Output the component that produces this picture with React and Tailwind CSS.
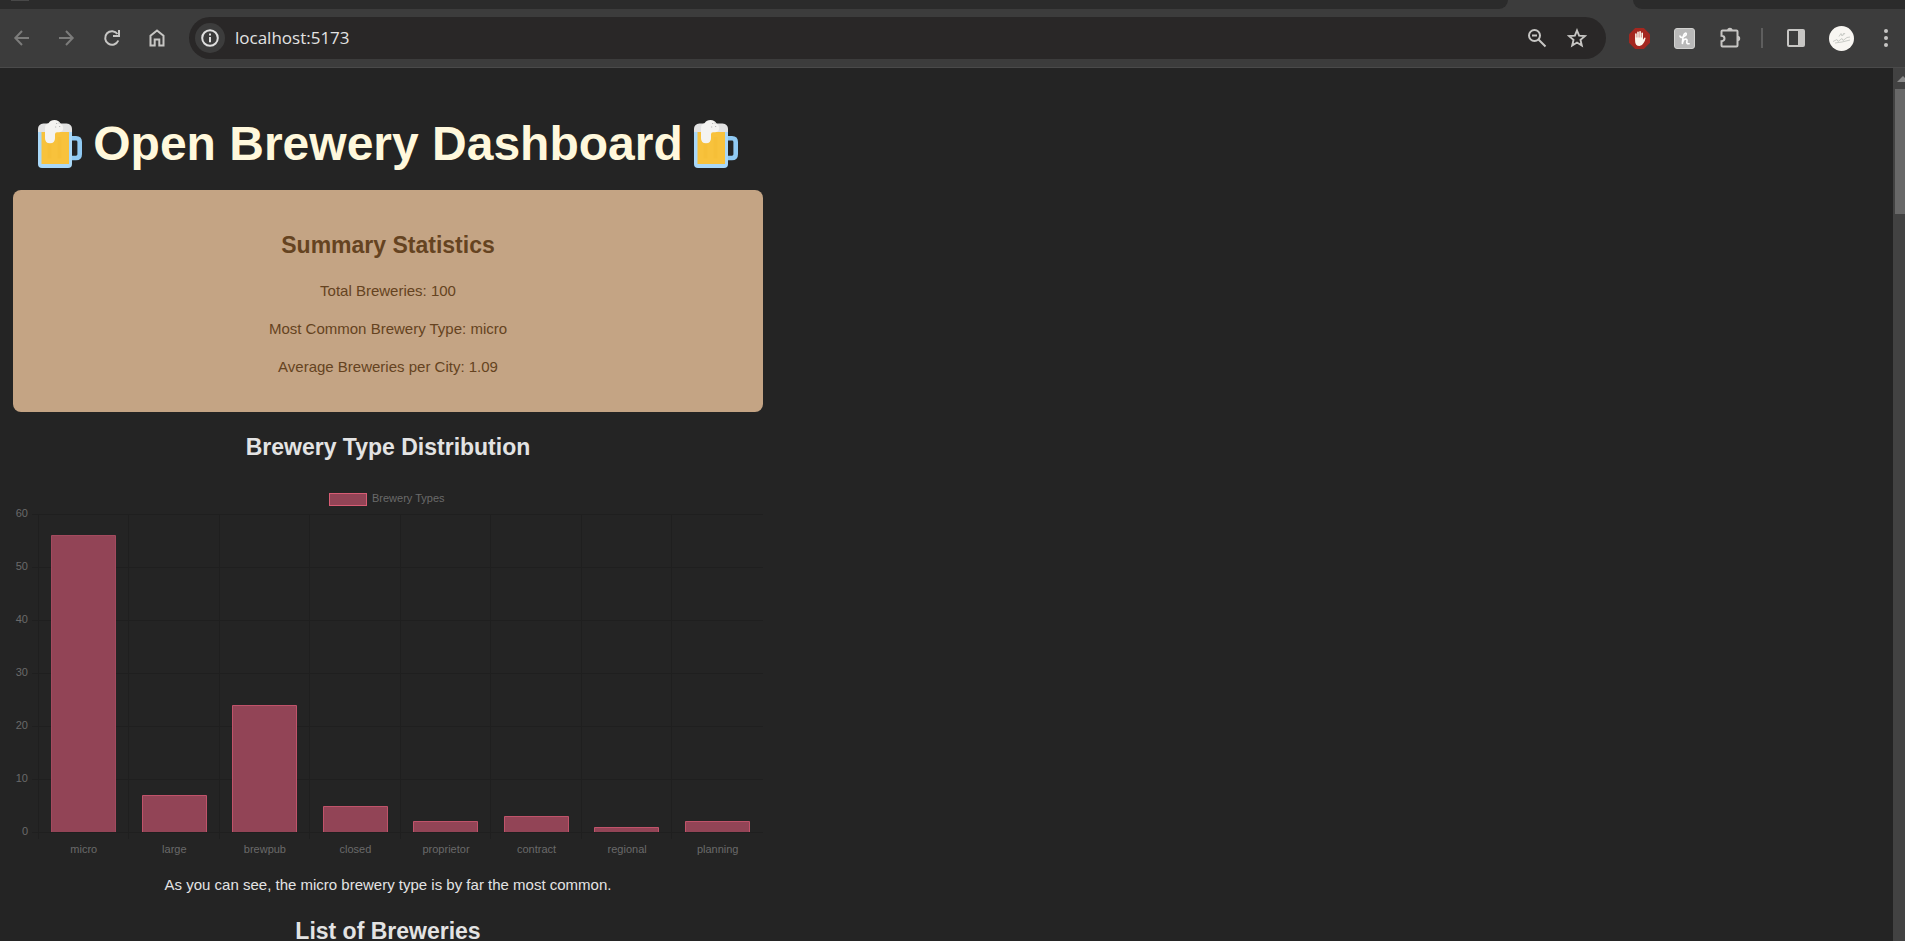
import React from "react";

const data = [
  ["micro", 56],
  ["large", 7],
  ["brewpub", 24],
  ["closed", 5],
  ["proprietor", 2],
  ["contract", 3],
  ["regional", 1],
  ["planning", 2],
];

function IconButton({ label, children, className = "" }) {
  return (
    <button type="button" aria-label={label} className={`flex shrink-0 items-center justify-center ${className}`}>
      {children}
    </button>
  );
}

function Stroke({ children, tone = "stroke-[#c7c6c4]" }) {
  return (
    <svg viewBox="0 0 20 20" className={`size-5 fill-none stroke-2 ${tone}`}>
      {children}
    </svg>
  );
}

function Beer() {
  return (
    <svg viewBox="0 0 44 48" className="h-12 w-11 shrink-0" aria-hidden="true">
      <path d="M33 18.200h5q3.700 0 3.700 3.700v12.400q0 3.700-3.700 3.700h-5" fill="none" stroke="#90caf3" strokeWidth="4.600" />
      <path d="M0 11h34v33q0 4-4 4H4q-4 0-4-4z" fill="#a9d8f8" />
      <path d="M3.500 11h27.500v33H3.500z" fill="#f8c23c" />
      <path d="M9.500 23h4v15.500h-4zM19.500 17h4v21.500h-4z" fill="#f6bf38" />
      <path d="M0 12V9q0-5 5.500-5.500h23Q34 4 34 9v3z" fill="#e2e2e2" />
      <path d="M7 8.500Q6.800 4 10.500 3.200 12.500 0 16.500 0q4.300 0 6 3.500 2.700 1.500 2.700 4.500 0 4-4 4.200H19q-2 0-2 2v4q0 5-5 5t-5-5z" fill="#f4f3f1" />
      <path d="M18 3.500h1.200M20.500 3h1.200M17 7h1.200M21 6.500h1.200" stroke="#b9b9b9" strokeWidth="1.200" />
    </svg>
  );
}

function BrowserBar() {
  return (
    <header className="shrink-0 bg-[#3c3c3c]">
      <div className="flex h-[9px] justify-between">
        <div className="w-[1508px] rounded-br-[14px] bg-[#2b2b2b] pl-[11px]">
          <div className="h-px w-[18px] bg-[#484848]" />
        </div>
        <div className="w-[272px] rounded-bl-[14px] bg-[#2b2b2b]" />
      </div>
      <div className="flex h-[59px] items-center border-b border-[#4a4a4a] pr-[9px]">
        <nav className="flex w-[189px] shrink-0 items-center gap-[25px] pl-3">
          <IconButton label="Back">
            <Stroke tone="stroke-[#7c7c7b]"><path d="M17 10H3.500M10 3 3.300 10l6.700 7" /></Stroke>
          </IconButton>
          <IconButton label="Forward">
            <Stroke tone="stroke-[#7c7c7b]"><path d="M2 10h13.500M9 3l6.700 7L9 17" /></Stroke>
          </IconButton>
          <IconButton label="Reload">
            <Stroke><path d="M16.300 12.500A6.800 6.800 0 1 1 15.500 6M17 2v6h-6" /></Stroke>
          </IconButton>
          <IconButton label="Home">
            <Stroke><path d="M3.500 17.500V7.800L10 2.500l6.500 5.300v9.700h-4.200v-6H7.700v6z" /></Stroke>
          </IconButton>
        </nav>
        <div className="flex h-[42px] flex-1 items-center rounded-full bg-[#292727] pl-1.5 pr-[19px]">
          <IconButton label="Site information" className="size-[30px] rounded-full bg-[#3c3c3c]">
            <Stroke tone="stroke-[#e0e0e0]">
              <circle cx="10" cy="10" r="7.800" />
              <path d="M10 9v5.200M10 5.600v2" />
            </Stroke>
          </IconButton>
          <input
            aria-label="Address"
            defaultValue="localhost:5173"
            className="ml-[10px] min-w-0 flex-1 bg-transparent font-['Open_Sans',sans-serif] text-[17px] text-[#e3e3e3] outline-none"
          />
          <div className="flex items-center gap-5">
            <IconButton label="Zoom">
              <Stroke><circle cx="7.500" cy="7.500" r="5.500" /><path d="m11.500 11.500 7 7M5 7.500h5" /></Stroke>
            </IconButton>
            <IconButton label="Bookmark">
              <svg viewBox="0 0 20 20" className="size-5 fill-none stroke-[#c7c6c4]" strokeWidth="1.900">
                <path d="m10 2.500 2.100 5.200 5.800.4-4.400 3.800 1.300 5.600-4.800-3-4.800 3 1.300-5.600L2.100 8.100l5.800-.4z" />
              </svg>
            </IconButton>
          </div>
        </div>
        <div className="flex shrink-0 items-center pl-[23px]">
          <IconButton label="Ad blocker">
            <svg viewBox="0 0 21 21" className="size-[21px]">
              <path d="M6.200 0h8.600L21 6.200v8.600L14.800 21H6.200L0 14.800V6.200z" fill="#a3271f" />
              <path d="M6.900 11V6M9 10V4.200M11.100 10V3.800M13.200 10.500V5.300" stroke="#fbf6ec" strokeWidth="1.600" strokeLinecap="round" />
              <path d="M6.100 9.500H14v2.300l1.300-2q.8-.6 1.300.1-.6 3-2 5.200-1.400 2.800-4.100 2.800-4.400 0-4.400-5z" fill="#fbf6ec" />
            </svg>
          </IconButton>
          <IconButton label="Honey" className="ml-6">
            <svg viewBox="0 0 21 21" className="size-[21px]">
              <rect x=".5" y=".5" width="20" height="20" rx="2.500" fill="#b9b9b9" stroke="#d2d2d0" />
              <path d="M6 8q.3 1.800 2.500 1.200Q12.600 8 12.300 5.700 11.500 4.300 10 6.500 8.600 9.500 8.300 16q.8-4.700 3.200-5 2 0 1.400 2.500-.7 2.700 2.200 2.200" fill="none" stroke="#fff" strokeWidth="1.600" strokeLinecap="round" />
            </svg>
          </IconButton>
          <IconButton label="Extensions" className="ml-6">
            <svg viewBox="0 0 22 22" className="size-[22px]">
              <path d="M3.500 3.500h14q1 0 1 1v14q0 1-1 1h-14q-1 0-1-1v-4.300q3-.3 3-2.700t-3-2.700V4.500q0-1 1-1z" fill="none" stroke="#c7c6c4" strokeWidth="2" />
              <path d="M8.200 3.500a2.700 2.700 0 0 1 5.400 0zM18.500 8.800a2.700 2.700 0 0 1 0 5.400z" fill="#c7c6c4" />
            </svg>
          </IconButton>
          <div className="ml-5 h-5 w-0.5 bg-[#5e5e5e]" />
          <IconButton label="Side panel" className="ml-[23px]">
            <svg viewBox="0 0 20 20" className="size-5">
              <rect x="2" y="2" width="16" height="16" rx="1" fill="none" stroke="#c7c6c4" strokeWidth="2" />
              <path d="M12 2h6v16h-6z" fill="#c7c6c4" />
            </svg>
          </IconButton>
          <IconButton label="Profile" className="ml-[23px] size-[25px] rounded-full bg-[#f8f6f2]">
            <svg viewBox="0 0 25 25" className="size-[25px] fill-none stroke-[#c9cbc6]">
              <path d="M10 10.500l2-3 1 2.500 2-3M14 9.500l2-2.500M4 15.500l4-2 1 2 4-3 1 2 4-3 3-.5M6 17l7-1 8-2" />
            </svg>
          </IconButton>
          <IconButton label="Menu" className="ml-[22px]">
            <svg viewBox="0 0 20 20" className="size-5 fill-[#c7c6c4]">
              <circle cx="10" cy="3" r="2" /><circle cx="10" cy="10" r="2" /><circle cx="10" cy="17" r="2" />
            </svg>
          </IconButton>
        </div>
      </div>
    </header>
  );
}

function Chart() {
  const left = 25.5;
  const step = 90.56;
  const base = 348;
  const unit = 5.3;
  return (
    <svg viewBox="0 0 750 375" className="block w-full font-['Liberation_Sans',sans-serif] text-[11px]" role="img" aria-label="Brewery types bar chart">
      <g stroke="#1f1f1f">
        {[0, 10, 20, 30, 40, 50, 60].map((v) => (
          <path key={v} d={`M19 ${base + 0.5 - v * unit}H750`} />
        ))}
        {data.map(([name], i) => (
          <path key={name} d={`M${Math.round(left + i * step) - 0.5} 30V355`} />
        ))}
      </g>
      <g fill="#6a6a6a">
        {[0, 10, 20, 30, 40, 50, 60].map((v) => (
          <text key={v} x="15" y={base + 3 - v * unit} textAnchor="end">{v}</text>
        ))}
        {data.map(([name], i) => (
          <text key={name} x={left + (i + 0.5) * step} y="369" textAnchor="middle">{name}</text>
        ))}
        <text x="359" y="18">Brewery Types</text>
      </g>
      <rect x="316.500" y="9.500" width="37" height="12" fill="#924456" stroke="#d85c74" />
      {data.map(([name, v], i) => {
        const x = Math.round(left + i * step + 12.5) + 0.5;
        const y = Math.round(base - v * unit) + 0.5;
        return (
          <g key={name}>
            <path d={`M${x} ${base}V${y}h64V${base}z`} fill="#924456" />
            <path d={`M${x} ${base}V${y}h64V${base}`} fill="none" stroke={i === 0 ? "#a34a5e" : "#c0536a"} />
          </g>
        );
      })}
    </svg>
  );
}

export default function App() {
  return (
    <div className="flex h-screen flex-col overflow-hidden bg-[#242424] font-['Liberation_Sans',Arial,sans-serif]">
      <BrowserBar />
      <div className="flex min-h-0 flex-1">
        <main className="min-w-0 flex-1 overflow-hidden px-[13px] pt-[46px] text-center">
          <div className="max-w-[750px]">
            <h1 className="flex h-[60px] items-center justify-center gap-[11px] whitespace-nowrap text-[48px] font-bold text-[#fff8dc]">
              <Beer />
              Open Brewery Dashboard
              <Beer />
            </h1>
            <section className="mt-4 rounded-lg bg-[#c4a484] pb-[34px] pt-[40px] text-[15px] leading-[22px] text-[#654321]">
              <h2 className="text-[23px] font-bold leading-[30px]">Summary Statistics</h2>
              <p className="mt-5">Total Breweries: 100</p>
              <p className="mt-4">Most Common Brewery Type: micro</p>
              <p className="mt-4">Average Breweries per City: 1.09</p>
            </section>
            <h2 className="mt-5 text-[23px] font-bold leading-[30px] text-[#e3e3e3]">Brewery Type Distribution</h2>
            <div className="mt-[22px]"><Chart /></div>
            <p className="mt-[15px] text-[15px] leading-[22px] text-[#e3e3e3]">
              As you can see, the micro brewery type is by far the most common.
            </p>
            <h2 className="mt-[25px] text-[23px] font-bold leading-5 text-[#e3e3e3]">List of Breweries</h2>
          </div>
        </main>
        <div className="flex w-3 shrink-0 flex-col overflow-hidden bg-[#424242] pl-0.5" aria-hidden="true">
          <svg viewBox="0 0 10 21" className="h-[21px] w-[10px] shrink-0"><path d="M2 14l6-6 6 6z" fill="#8a8a8a" /></svg>
          <div className="h-[125px] bg-[#686868]" />
        </div>
      </div>
    </div>
  );
}
